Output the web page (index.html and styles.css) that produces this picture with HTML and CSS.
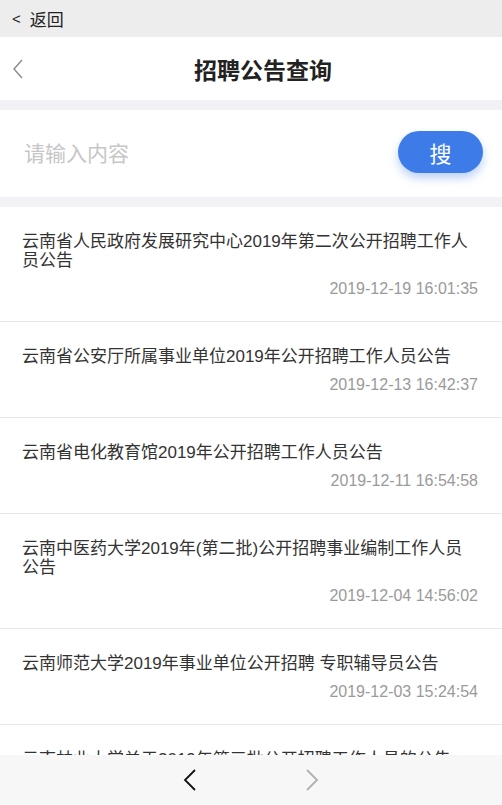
FILE: index.html
```html
<!DOCTYPE html>
<html lang="zh-CN">
<head>
    <meta charset="UTF-8">
    <meta name="viewport" content="width=device-width, initial-scale=1.0">
    <title>招聘公告查询</title>
    <link rel="stylesheet" href="styles.css">
</head>
<body>
    <div class="status">
        <span class="status-arrow">&lt;</span>
        <span>返回</span>
    </div>

    <div class="header">
        <div class="back">
            <svg width="12" height="20" viewBox="0 0 12 20"><polyline points="10,1 2,10 10,19" fill="none" stroke="#8a8a8a" stroke-width="1.4"/></svg>
        </div>
        <h1 class="title">招聘公告查询</h1>
    </div>

    <div class="search">
        <input class="search-input" type="text" placeholder="请输入内容">
        <button class="search-btn">搜</button>
    </div>

    <ul class="list">
        <li class="item">
            <p class="item-title">云南省人民政府发展研究中心2019年第二次公开招聘工作人员公告</p>
            <p class="item-date">2019-12-19 16:01:35</p>
        </li>
        <li class="item">
            <p class="item-title">云南省公安厅所属事业单位2019年公开招聘工作人员公告</p>
            <p class="item-date">2019-12-13 16:42:37</p>
        </li>
        <li class="item">
            <p class="item-title">云南省电化教育馆2019年公开招聘工作人员公告</p>
            <p class="item-date">2019-12-11 16:54:58</p>
        </li>
        <li class="item">
            <p class="item-title">云南中医药大学2019年(第二批)公开招聘事业编制工作人员公告</p>
            <p class="item-date">2019-12-04 14:56:02</p>
        </li>
        <li class="item">
            <p class="item-title">云南师范大学2019年事业单位公开招聘 专职辅导员公告</p>
            <p class="item-date">2019-12-03 15:24:54</p>
        </li>
        <li class="item">
            <p class="item-title">云南林业大学关于2019年第三批公开招聘工作人员的公告</p>
            <p class="item-date">2019-12-02 10:12:20</p>
        </li>
    </ul>

    <div class="toolbar">
        <svg width="14" height="22" viewBox="0 0 14 22"><polyline points="12,1 2,11 12,21" fill="none" stroke="#111" stroke-width="1.8"/></svg>
        <svg width="14" height="22" viewBox="0 0 14 22"><polyline points="2,1 12,11 2,21" fill="none" stroke="#b0b0b0" stroke-width="1.8"/></svg>
    </div>
</body>
</html>
```

FILE: styles.css
```css
*{
    margin: 0;
    padding: 0;
    list-style: none;
    box-sizing: border-box;
}
body{
    width: 502px;
    height: 805px;
    overflow: hidden;
    background: #f2f2f6;
    font-family: "Liberation Sans", "Noto Sans CJK SC", sans-serif;
    color: #333;
}
.status{
    height: 37px;
    background: #ededed;
    display: flex;
    align-items: center;
    padding-left: 12px;
    font-size: 17px;
    color: #222;
}
.status-arrow{
    margin-right: 9px;
    font-size: 15px;
}
.header{
    height: 63px;
    background: #fff;
    display: flex;
    align-items: center;
}
.back{
    width: 24px;
    padding-left: 12px;
    display: flex;
    align-items: center;
}
.title{
    flex: 1;
    text-align: center;
    font-size: 23px;
    font-weight: bold;
    color: #222;
}
.search{
    height: 87px;
    margin-top: 10px;
    background: #fff;
    display: flex;
    align-items: center;
    justify-content: space-between;
    padding: 0 19px 0 24px;
}
.search-input{
    border: none;
    outline: none;
    background: none;
    font-family: inherit;
    font-size: 21px;
    width: 250px;
}
.search-input::placeholder{
    color: #c6c6c6;
}
.search-btn{
    width: 85px;
    height: 42px;
    border: none;
    border-radius: 21px;
    background: #3d7ce8;
    color: #fff;
    font-family: inherit;
    font-size: 22px;
    box-shadow: 0 5px 10px rgba(61,124,232,0.35);
    margin-top: -4px;
}
.list{
    margin-top: 10px;
    background: #fff;
}
.item{
    padding: 25px 24px 22px 22px;
    border-bottom: 1px solid #e8e8e8;
}
.item-title{
    font-size: 17px;
    line-height: 19px;
    padding-right: 6px;
    color: #333;
}
.item-date{
    margin-top: 9px;
    font-size: 16px;
    line-height: 20px;
    text-align: right;
    color: #9a9a9a;
}
.toolbar{
    position: fixed;
    left: 0;
    right: 0;
    bottom: 0;
    height: 50px;
    background: #f7f7f7;
    display: flex;
    align-items: center;
    justify-content: center;
    gap: 108px;
}
```
